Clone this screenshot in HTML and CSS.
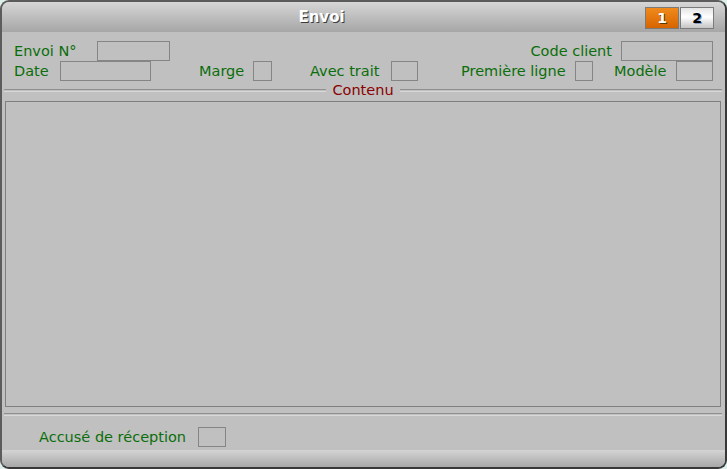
FILE: index.html
```html
<!DOCTYPE html>
<html lang="fr">

<head>
    <meta charset="UTF-8">
    <title>Envoi</title>
    <link rel="stylesheet" href="styles.css">
</head>

<body>

    <div class="fenetre">

        <div class="titre">
            <span class="titre-txt">Envoi</span>
            <div class="pages">
                <span class="page actif">1</span>
                <span class="page">2</span>
            </div>
        </div>

        <div class="entete">
            <div class="ligne1">
                <label class="lib">Envoi N°</label>
                <span class="champ"></span>
                <span></span>
                <label class="lib droite">Code client</label>
                <span class="champ"></span>
            </div>
            <div class="ligne2">
                <div class="grp"><label class="lib l-date">Date</label><span class="champ c-date"></span></div>
                <div class="grp"><label class="lib l-marge">Marge</label><span class="champ c-marge"></span></div>
                <div class="grp"><label class="lib l-trait">Avec trait</label><span class="champ c-trait"></span></div>
                <div class="grp"><label class="lib l-prem">Première ligne</label><span class="champ c-prem"></span></div>
                <div class="grp"><label class="lib l-mod">Modèle</label><span class="champ c-mod"></span></div>
            </div>
        </div>

        <div class="sep-titre">
            <span class="trait"></span>
            <span class="sep-txt">Contenu</span>
            <span class="trait"></span>
        </div>

        <div class="contenu"></div>

        <div class="sep"></div>

        <div class="pied">
            <label class="lib l-accuse">Accusé de réception</label>
            <span class="champ c-accuse"></span>
        </div>

        <div class="barre-bas"></div>

    </div>

</body>

</html>
```

FILE: styles.css
```css
body {
    margin: 0;
    background-color: #dcefeb;
    font-family: "DejaVu Sans", Verdana, sans-serif;
}

.fenetre {
    width: 727px;
    height: 469px;
    box-sizing: border-box;
    background-color: #c0c0c0;
    border: 2px solid #5c5c5c;
    border-right-color: #383838;
    border-bottom-color: #383838;
    border-radius: 9px;
    overflow: hidden;
    display: flex;
    flex-direction: column;
}

.titre {
    height: 30px;
    flex: none;
    background: linear-gradient(#d6d6d6, #a6a6a6);
    position: relative;
    display: flex;
    align-items: center;
    justify-content: center;
}

.titre-txt {
    color: #ffffff;
    font-weight: bold;
    font-size: 15px;
    text-shadow: 1px 1px 0 #3c3c3c;
    margin-right: 84px;
}

.pages {
    position: absolute;
    right: 11px;
    top: 5px;
    display: flex;
    gap: 1px;
}

.page {
    width: 34px;
    height: 22px;
    box-sizing: border-box;
    border: 1px solid #7a7a7a;
    background: linear-gradient(#e4e4e4, #ffffff 45%, #c4c4c4);
    font-size: 14px;
    font-weight: bold;
    color: #000000;
    text-shadow: 1px 1px 0 #8aa0c0;
    display: flex;
    align-items: center;
    justify-content: center;
}

.page.actif {
    background: linear-gradient(#f08a1c, #d86400);
    color: #ffffff;
    text-shadow: 1px 1px 0 #5a3a00;
}

.entete {
    padding: 8px 12px 0 12px;
    height: 41px;
    flex: none;
}

.lib {
    color: #0b6e0b;
    font-size: 14.5px;
    line-height: 20px;
    white-space: nowrap;
}

.champ {
    display: block;
    height: 20px;
    box-sizing: border-box;
    border: 1px solid #858585;
}

.ligne1 {
    display: grid;
    grid-template-columns: 83px 73px 1fr auto 92px;
    align-items: center;
    height: 21px;
}

.droite {
    margin-right: 9px;
}

.ligne2 {
    display: grid;
    grid-template-columns: 185px 111px 151px 153px auto;
    height: 20px;
}

.grp {
    display: flex;
    align-items: center;
}

.l-date { width: 46px; }
.l-marge { width: 54px; }
.l-trait { width: 81px; }
.l-prem { width: 114px; }
.l-mod { width: 62px; }

.c-date { width: 91px; }
.c-marge { width: 19px; }
.c-trait { width: 27px; }
.c-prem { width: 18px; }
.c-mod { width: 37px; }

.sep-titre {
    display: flex;
    align-items: center;
    height: 18px;
    margin: 0 3px 0 2px;
    flex: none;
}

.trait {
    flex: 1;
    height: 1px;
    border-top: 1px solid #909090;
    border-bottom: 1px solid #d8d8d8;
    margin-top: 1px;
}

.sep-txt {
    color: #8a0000;
    font-size: 14.5px;
    padding: 0 6px;
    line-height: 14px;
}

.contenu {
    height: 306px;
    margin: 2px 4px 0 3px;
    box-sizing: border-box;
    border: 1px solid #808080;
    flex: none;
}

.sep {
    height: 1px;
    margin: 6px 3px 0 2px;
    border-top: 1px solid #909090;
    border-bottom: 1px solid #d8d8d8;
    flex: none;
}

.pied {
    display: flex;
    align-items: center;
    padding: 11px 0 0 37px;
    height: 20px;
    flex: none;
}

.l-accuse {
    width: 159px;
}

.c-accuse {
    width: 28px;
}

.barre-bas {
    margin-top: auto;
    height: 17px;
    background: linear-gradient(#d4d4d4, #a8a8a8);
    flex: none;
}
```
